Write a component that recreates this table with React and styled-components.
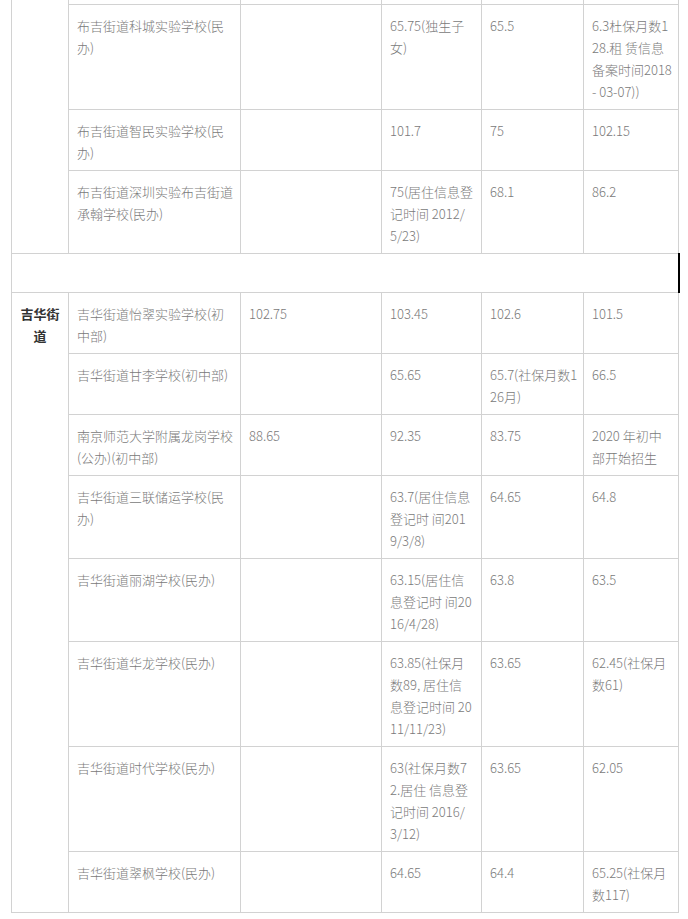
import React from 'react'
import styled, { createGlobalStyle } from 'styled-components'

const GlobalStyle = createGlobalStyle`
  html, body {
    margin: 0;
    padding: 0;
    background: #fff;
  }
  body {
    overflow: hidden;
    font-family: "Noto Sans CJK SC", "Noto Sans", sans-serif;
  }
`

const buji = [
    ['布吉街道科城实验学校(民\n办)', '', '65.75(独生子\n女)', '65.5', '6.3杜保月数1\n28.租 赁信息\n备案时间2018\n- 03-07))'],
    ['布吉街道智民实验学校(民\n办)', '', '101.7', '75', '102.15'],
    ['布吉街道深圳实验布吉街道\n承翰学校(民办)', '', '75(居住信息登\n记时间 2012/\n5/23)', '68.1', '86.2'],
]

const jihua = [
    ['吉华街道怡翠实验学校(初\n中部)', '102.75', '103.45', '102.6', '101.5'],
    ['吉华街道甘李学校(初中部)', '', '65.65', '65.7(社保月数1\n26月)', '66.5'],
    ['南京师范大学附属龙岗学校\n(公办)(初中部)', '88.65', '92.35', '83.75', '2020 年初中\n部开始招生'],
    ['吉华街道三联储运学校(民\n办)', '', '63.7(居住信息\n登记时 间201\n9/3/8)', '64.65', '64.8'],
    ['吉华街道丽湖学校(民办)', '', '63.15(居住信\n息登记时 间20\n16/4/28)', '63.8', '63.5'],
    ['吉华街道华龙学校(民办)', '', '63.85(社保月\n数89, 居住信\n息登记时间 20\n11/11/23)', '63.65', '62.45(社保月\n数61)'],
    ['吉华街道时代学校(民办)', '', '63(社保月数7\n2.居住 信息登\n记时间 2016/\n3/12)', '63.65', '62.05'],
    ['吉华街道翠枫学校(民办)', '', '64.65', '64.4', '65.25(社保月\n数117)'],
]

const widths = [57, 172, 141, 100, 102, 95]

export default function App() {
    return (
        <>
            <GlobalStyle />
            <Page>
                <Table>
                    <colgroup>
                        {widths.map((w, i) => <col key={i} style={{ width: w }} />)}
                    </colgroup>
                    <tbody>
                        {/* row above the fold, scrolled out of view */}
                        <ScrolledRow>
                            <AreaCell rowSpan={buji.length + 1}>{'布吉街\n道'}</AreaCell>
                            <Cell></Cell>
                            <Cell></Cell>
                            <Cell></Cell>
                            <Cell></Cell>
                            <Cell></Cell>
                        </ScrolledRow>
                        {buji.map((row, i) => (
                            <tr key={'b' + i}>
                                {row.map((c, j) => <Cell key={j}>{c}</Cell>)}
                            </tr>
                        ))}
                        <tr>
                            <GapCell colSpan={6}>{'\u00a0'}</GapCell>
                        </tr>
                        {jihua.map((row, i) => (
                            <tr key={'j' + i}>
                                {i === 0 && <AreaCell rowSpan={jihua.length}>{'吉华街\n道'}</AreaCell>}
                                {row.map((c, j) => <Cell key={j}>{c}</Cell>)}
                            </tr>
                        ))}
                    </tbody>
                </Table>
            </Page>
        </>
    )
}

let Page = styled.div`
    height: 919px;
    overflow: hidden;
    padding-left: 11px;
`
let Table = styled.table`
    margin-top: -76px;
    width: 667px;
    border-collapse: collapse;
    table-layout: fixed;
    font-size: 13px;
    line-height: 22px;
    color: #7a7a7a;
    font-weight: 300;
`
let Cell = styled.td`
    border: 1px solid #d2d2d2;
    padding: 10px 0 6px 8px;
    vertical-align: top;
    white-space: pre-line;
    word-break: break-all;
`
let AreaCell = styled(Cell)`
    text-align: center;
    padding-left: 0;
    font-weight: bold;
    color: #333;
`
let GapCell = styled(Cell)`
    border-right: 2px solid #000;
`
let ScrolledRow = styled.tr`
    height: 80px;
`
